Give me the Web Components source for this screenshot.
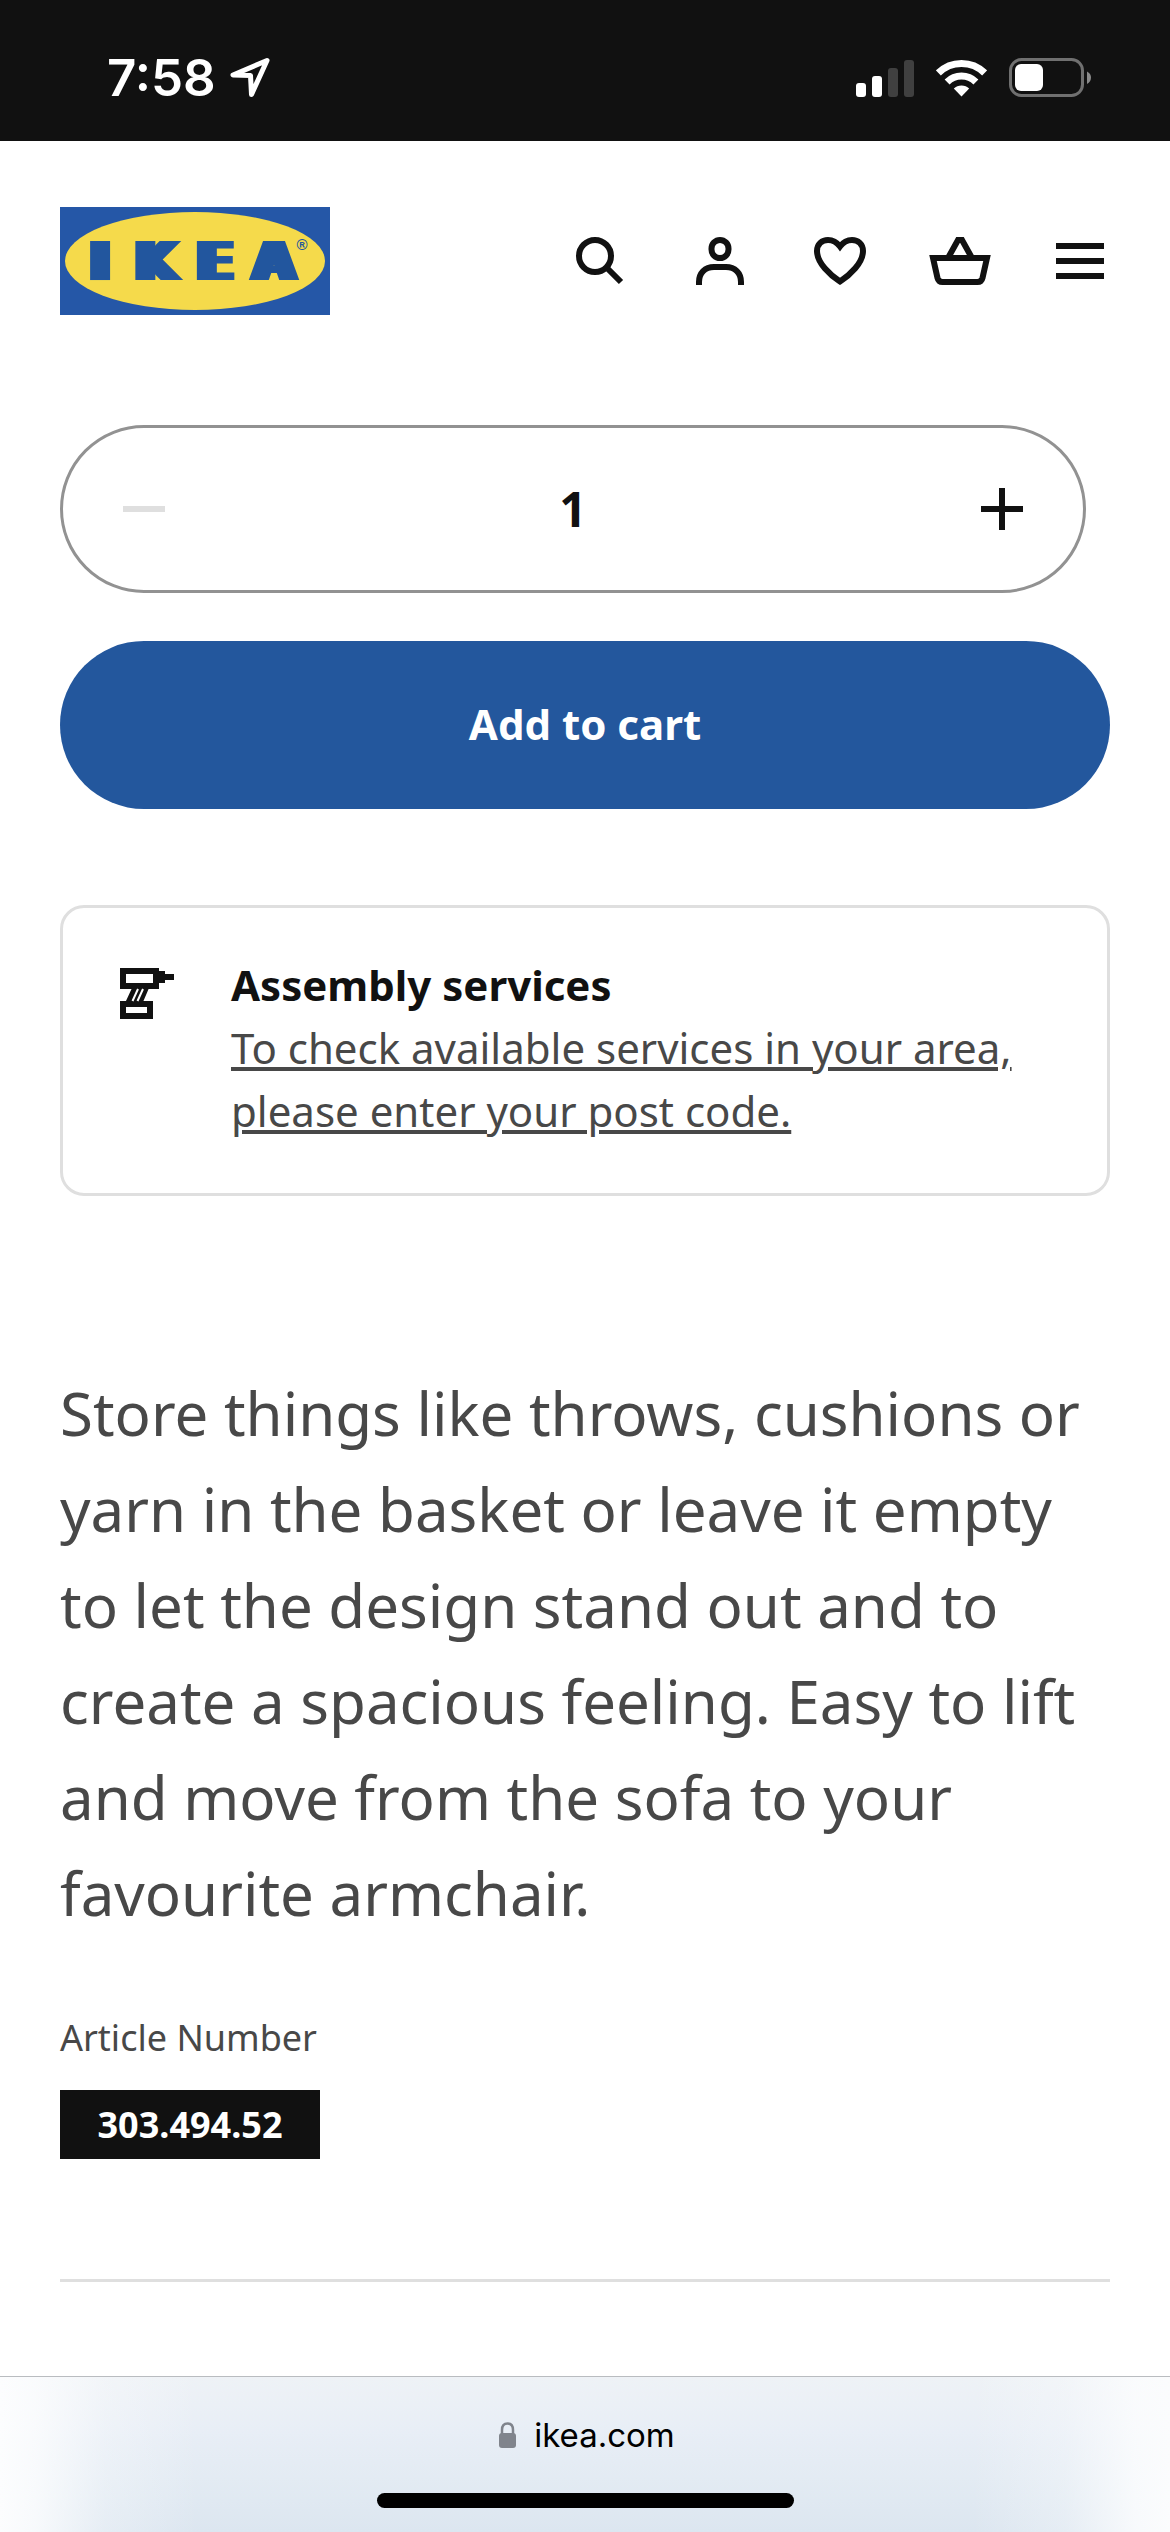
<!DOCTYPE html>
<html lang="en">
<head>
<meta charset="utf-8">
<meta name="viewport" content="width=device-width, initial-scale=1">
<title>IKEA</title>
<style>
  body {
    margin: 0;
    background: #fff;
    color: #484848;
    font-family: "Noto Sans", sans-serif;
  }
</style>
</head>
<body>
<product-page>
  <status-bar slot="top" time="7:58"></status-bar>
  <site-header slot="top"></site-header>
  <quantity-picker value="1"></quantity-picker>
  <primary-button>Add to cart</primary-button>
  <service-card heading="Assembly services">To check available services in your area, please enter your post code.</service-card>
  <product-summary number="303.494.52">Store things like throws, cushions or yarn in the basket or leave it empty to let the design stand out and to create a spacious feeling. Easy to lift and move from the sofa to your favourite armchair.</product-summary>
  <browser-bar slot="bottom">ikea.com</browser-bar>
</product-page>

<script>
class BaseElement extends HTMLElement {
  connectedCallback() {
    if (this.shadowRoot) return;
    this.attachShadow({ mode: "open" }).innerHTML =
      `<style>*{box-sizing:border-box}svg{display:block;flex:none}button{font:inherit;color:inherit;border:0;background:none;padding:0;margin:0}</style>` + this.render();
  }
}

customElements.define("product-page", class extends BaseElement {
  render() {
    return `<style>
      :host { display: flex; flex-direction: column; min-height: 100vh; }
      main { display: flex; flex-direction: column; padding: 44px 60px 0; }
      footer { margin-top: auto; }
    </style>
    <slot name="top"></slot>
    <main><slot></slot></main>
    <footer><slot name="bottom"></slot></footer>`;
  }
});

customElements.define("status-bar", class extends BaseElement {
  render() {
    return `<style>
      :host { display: flex; justify-content: space-between; align-items: center; height: 141px;
        box-sizing: border-box; padding: 14px 78px 0 107px; background: #111; color: #fff; }
      div { display: flex; align-items: center; }
      .left { gap: 14px; }
      .right { gap: 22px; }
      time { font: 600 51px/60px Inter, sans-serif; }
    </style>
    <div class="left">
      <time>${this.getAttribute("time")}</time>
      <svg width="40" height="41" viewBox="0 0 40 41" fill="none" stroke="#fff" stroke-width="5" stroke-linejoin="round"><path d="M37 3.5 3 18 20.500 18.500 21.500 37.500Z"/></svg>
    </div>
    <div class="right">
      <svg width="58" height="38" viewBox="0 0 58 38" fill="#fff"><rect y="24" width="10" height="14" rx="3"/><rect x="16" y="17" width="10" height="21" rx="3"/><g fill="#404040"><rect x="32" y="9" width="10" height="29" rx="3"/><rect x="48" y="1" width="10" height="37" rx="3"/></g></svg>
      <svg width="51" height="38" viewBox="0 0 51 38" fill="none" stroke="#fff" stroke-width="7"><path d="M2.400 13.900A33 33 0 0 1 48.600 13.900M11.100 22.900A20.500 20.500 0 0 1 39.900 22.900"/><path d="M25.500 37.500 17.800 29.600A11 11 0 0 1 33.200 29.600Z" fill="#fff" stroke="none"/></svg>
      <svg width="83" height="40" viewBox="0 0 83 40"><rect x="1.500" y="1.500" width="72" height="36" rx="11" fill="none" stroke="#707070" stroke-width="3"/><rect x="6" y="6" width="28" height="27" rx="6" fill="#fff"/><path d="M78 13.500Q82 15.500 82 19.500T78 26Z" fill="#8a8a8a"/></svg>
    </div>`;
  }
});

customElements.define("brand-logo", class extends BaseElement {
  render() {
    return `<style>:host { display: block; }</style>
    <svg width="270" height="108" viewBox="0 0 270 108">
      <defs><filter id="heavy" x="-10%" width="120%"><feMorphology operator="dilate" radius="5 0"/></filter></defs>
      <rect width="270" height="108" fill="#2557a7"/>
      <ellipse cx="135" cy="54" rx="130" ry="49" fill="#f5da4b"/>
      <text x="40 96 155 214" y="73" text-anchor="middle" font-family="DejaVu Sans" font-weight="700" font-size="53" fill="#23579e" filter="url(#heavy)">IKEA</text>
      <text x="242" y="43" text-anchor="middle" font-family="Liberation Sans" font-size="15" font-weight="700" fill="#23579e">®</text>
    </svg>`;
  }
});

customElements.define("site-header", class extends BaseElement {
  render() {
    const icons = {
      "Search": `<circle cx="31" cy="31" r="16"/><path d="m42 42 15 15"/>`,
      "Account": `<rect x="27.500" y="15" width="17" height="18" rx="8.500"/><path d="M15 60V57C15 48 21 42 30 42H42C51 42 57 48 57 57V60"/>`,
      "Favourites": `<path d="M36 56.500C26 50 13 38 13 26 13 19 18 15 24 15 29 15 33 17.500 36 21.500 39 17.500 43 15 48 15 54 15 59 19 59 26 59 38 46 50 36 56.500Z"/>`,
      "Cart": `<path d="M9 33H63L58.500 53Q57.500 57 53.500 57H18.500Q14.500 57 13.500 53ZM24 33 34 15H38L48 33"/>`,
      "Menu": `<path d="M12 21H60M12 36H60M12 51H60"/>`
    };
    return `<style>
      :host { display: flex; justify-content: space-between; align-items: center; padding: 66px 54px 66px 60px; background: #fff; }
      nav { display: flex; gap: 48px; }
      svg { fill: none; stroke: #111; stroke-width: 6; }
    </style>
    <a href="#" aria-label="IKEA home"><brand-logo></brand-logo></a>
    <nav>${Object.entries(icons).map(([n, p]) =>
      `<button type="button" aria-label="${n}"><svg width="72" height="72" viewBox="0 0 72 72">${p}</svg></button>`).join("")}</nav>`;
  }
});

customElements.define("quantity-picker", class extends BaseElement {
  render() {
    return `<style>
      :host { display: flex; align-items: center; box-sizing: border-box; height: 168px; margin-right: 24px;
        padding: 0 45px; border: 3px solid #929292; border-radius: 84px; color: #111; }
      input { flex: 1; min-width: 0; padding: 0; border: 0; background: none; color: inherit; text-align: center;
        font: 700 48px/72px "Noto Sans", sans-serif; }
      svg { fill: none; stroke: #111; stroke-width: 6; }
      button:disabled svg { stroke: #dfdfdf; }
    </style>
    <button type="button" aria-label="Decrease quantity" disabled><svg width="72" height="72" viewBox="0 0 72 72"><path d="M15 36H57"/></svg></button>
    <input type="text" inputmode="numeric" aria-label="Quantity" value="${this.getAttribute("value")}">
    <button type="button" aria-label="Increase quantity"><svg width="72" height="72" viewBox="0 0 72 72"><path d="M15 36H57M36 15V57"/></svg></button>`;
  }
});

customElements.define("primary-button", class extends BaseElement {
  render() {
    return `<style>
      :host { display: block; margin-top: 48px; }
      button { display: block; width: 100%; height: 168px; padding-bottom: 4px; border-radius: 84px; background: #23579d; color: #fff;
        font: 700 42px/63px "Noto Sans", sans-serif; }
    </style>
    <button type="button"><slot></slot></button>`;
  }
});

customElements.define("service-card", class extends BaseElement {
  render() {
    return `<style>
      :host { display: flex; align-items: flex-start; gap: 48px; margin-top: 96px; padding: 45px 48px 51px;
        border: 3px solid #dfdfdf; border-radius: 24px; font-size: 42px; line-height: 63px; }
      svg { margin-top: 3px; }
      h2 { margin: 0; font: inherit; font-weight: 700; color: #111; }
      a { color: inherit; text-decoration: underline; }
    </style>
    <svg width="72" height="72" viewBox="0 0 72 72"><g fill="none" stroke="#111" stroke-width="6"><path d="M12 15H45V30H12ZM12 48H39V60H12Z"/></g><path fill="#111" d="M48 15H54V18H63V24H54V27H48ZM21 32H38L32 46H14.500Z"/><path d="M27 33 21.500 45M32 33 26.500 45" stroke="#fff" stroke-width="2"/></svg>
    <div><h2>${this.getAttribute("heading")}</h2><a href="#"><slot></slot></a></div>`;
  }
});

customElements.define("product-summary", class extends BaseElement {
  render() {
    return `<style>
      :host { display: block; margin-top: 169px; padding-bottom: 120px; border-bottom: 3px solid #dfdfdf; }
      p { margin: 0; font-size: 60px; line-height: 96px; }
      dl { margin: 70px 0 0; font-size: 36px; line-height: 54px; }
      dd { width: fit-content; min-width: 260px; margin: 25px 0 0; padding: 8px 36px 7px; background: #111; color: #fff; font-weight: 700; text-align: center; }
    </style>
    <p><slot></slot></p>
    <dl><dt>Article Number</dt><dd>${this.getAttribute("number")}</dd></dl>`;
  }
});

customElements.define("browser-bar", class extends BaseElement {
  render() {
    return `<style>
      :host { display: flex; flex-direction: column; align-items: center; justify-content: space-between; box-sizing: border-box;
        height: 156px; padding: 36px 0 24px; border-top: 1px solid #b9bcc0; color: #000;
        background: linear-gradient(90deg, #fcfdfe, rgba(252,253,254,.85) 3%, rgba(252,253,254,.3) 9%, rgba(252,253,254,0) 17%, rgba(252,253,254,0) 83%, rgba(252,253,254,.3) 91%, rgba(252,253,254,.85) 97%, #fbfcfd),
          linear-gradient(#eef2f6, #e8eef6 35%, #e3ebf3 65%, #dce6f0); }
      .address { display: flex; align-items: center; gap: 18px; padding-left: 4px; font: 400 33px/44px Inter, sans-serif; }
      .home { width: 417px; height: 15px; border-radius: 8px; background: #000; }
    </style>
    <div class="address">
      <svg width="17" height="26" viewBox="0 0 17 26"><rect y="11" width="17" height="15" rx="3" fill="#80848c"/><path d="M3 12V8Q3 1.500 8.500 1.500T14 8V12" fill="none" stroke="#80848c" stroke-width="2.500"/></svg>
      <slot></slot>
    </div>
    <div class="home"></div>`;
  }
});
</script>
</body>
</html>
